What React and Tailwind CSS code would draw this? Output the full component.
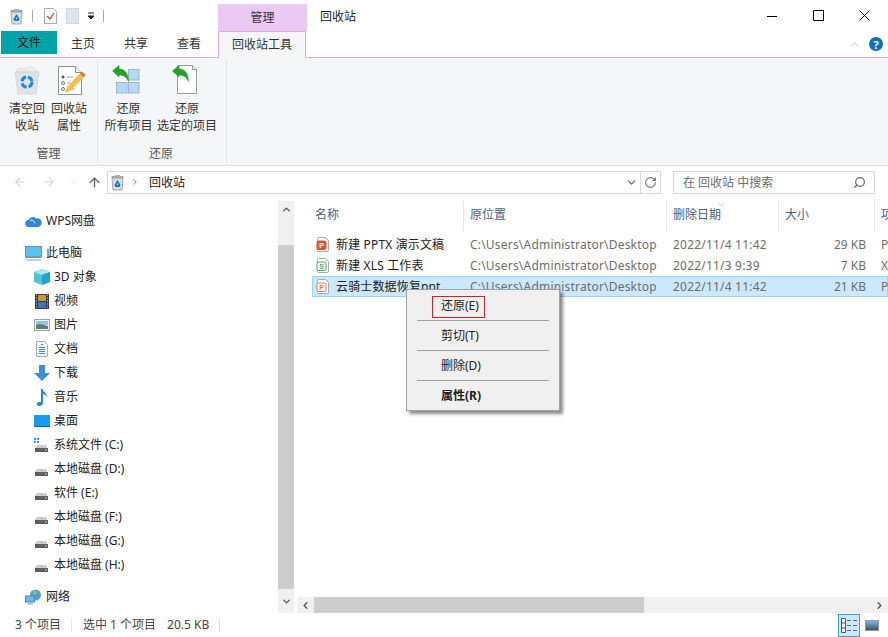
import React from "react";
import { ArrowLeft, ArrowRight, ArrowUp, ChevronDown, ChevronUp, ChevronRight, ChevronLeft, RotateCw, Search } from "lucide-react";

function BinIcon() {
  return (
    <svg width="13" height="17" viewBox="0 0 13 17">
      <path d="M1 4h11l-1 12H2z" fill="#d5dfe6" stroke="#8d979e" strokeWidth="0.8" />
      <path d="M0.500 3h12" stroke="#8d979e" strokeWidth="1.6" />
      <path d="M4 1h5v1.500H4z" fill="#aab3b9" />
      <path d="M6.500 6l3 5-1 2h-4l-1-2z" fill="#1471bd" />
      <path d="M5.800 9.500h1.400v1.700H5.800z" fill="#e3edf3" />
    </svg>
  );
}

function BigBin() {
  return (
    <svg width="26" height="29" viewBox="0 0 26 29">
      <path d="M2 5l3-3 6 1 4-3 6 2 3 4z" fill="#eceeef" stroke="#cfd3d5" strokeWidth="0.6" />
      <path d="M1 6h24l-3 22H4z" fill="#dfe3e5" stroke="#c8ccce" strokeWidth="0.6" />
      <circle cx="13" cy="16" r="5" fill="none" stroke="#1f86d8" strokeWidth="3" strokeDasharray="6 2" />
    </svg>
  );
}

function BigProps() {
  return (
    <svg width="28" height="29" viewBox="0 0 28 29">
      <path d="M0.500 0.500h17l6 6v22h-23z" fill="#fff" stroke="#8f8f8f" />
      <path d="M17.500 0.500v6h6" fill="#f1f1f1" stroke="#8f8f8f" />
      <circle cx="5" cy="11" r="1.500" fill="#555" />
      <circle cx="5" cy="17" r="1.500" fill="none" stroke="#777" />
      <circle cx="5" cy="23" r="1.500" fill="none" stroke="#777" />
      <path d="M9 11h6M9 17h3M9 23h8" stroke="#999" />
      <path d="M24 6l3.500 3-15 15-5 2 2-5z" fill="#f6c244" stroke="#d99a22" strokeWidth="0.6" />
      <path d="M24 6l3.500 3-2 2-3.500-3z" fill="#e2704a" />
    </svg>
  );
}

function GreenArrow() {
  return (
    <svg width="17" height="17" viewBox="0 0 17 17">
      <path d="M0.500 6L7 0.500V4c5 0 9 3 9.500 12.500-1.500-4-4.500-6.500-9.500-6.500v2z" fill="#21a32a" stroke="#178a20" strokeWidth="0.5" />
    </svg>
  );
}

function RestoreAll() {
  return (
    <div className="relative w-[30px] h-[31px]">
      <svg width="30" height="31" viewBox="0 0 30 31">
        {[[14.5, 1.5], [2.5, 14.5], [14.5, 14.5]].map(([x, y]) => (
          <rect key={x + "-" + y} x={x} y={y} width="10.500" height="10.500" fill="#b6d8f4" stroke="#9bb4c8" />
        ))}
      </svg>
      <div className="absolute left-[-2px] top-[-3px]"><GreenArrow /></div>
    </div>
  );
}

function RestoreOne() {
  return (
    <div className="relative w-[30px] h-[30px]">
      <svg width="30" height="30" viewBox="0 0 30 30">
        <path d="M5.500 0.500h15l4 4v24h-19z" fill="#fff" stroke="#9a9a9a" />
        <path d="M20.500 0.500v4h4" fill="#eee" stroke="#9a9a9a" />
      </svg>
      <div className="absolute left-0 top-0"><GreenArrow /></div>
    </div>
  );
}

function Cloud() {
  return (
    <svg width="17" height="12" viewBox="0 0 17 12">
      <path d="M4 12a3.500 3.500 0 0 1-.5-7A4.500 4.500 0 0 1 11 3.500 4 4 0 0 1 13.500 12z" fill="#2f86dc" />
      <path d="M5 5.500c2-1 4 .5 5 3" stroke="#fff" fill="none" />
    </svg>
  );
}

function Monitor() {
  return (
    <svg width="17" height="15" viewBox="0 0 17 15">
      <rect x="0.500" y="0.500" width="16" height="10.500" fill="#5cc1f3" stroke="#6f8da0" />
      <path d="M1 11h15v1H1z" fill="#7c8f9b" />
      <path d="M1 14h15" stroke="#98a5ae" />
    </svg>
  );
}

function Cube() {
  return (
    <svg width="16" height="16" viewBox="0 0 16 16">
      <path d="M8 0L16 3v10l-8 3-8-3V3z" fill="#4fc4de" />
      <path d="M0 3l8 3 8-3-8-3z" fill="#a8e6f2" />
      <path d="M8 6v10l8-3V3z" fill="#20a6c8" />
    </svg>
  );
}

function Film() {
  return (
    <svg width="14" height="15" viewBox="0 0 14 15">
      <rect width="14" height="15" fill="#3c3c3c" />
      <rect x="3" y="1" width="8" height="6" fill="#c9983e" />
      <rect x="3" y="8" width="8" height="6" fill="#3e73c4" />
      <path d="M1 1h1M1 4h1M1 7h1M1 10h1M1 13h1M12 1h1M12 4h1M12 7h1M12 10h1M12 13h1" stroke="#ddd" />
    </svg>
  );
}

function Picture() {
  return (
    <svg width="16" height="12" viewBox="0 0 16 12">
      <rect x="0.500" y="0.500" width="15" height="11" fill="#eef3f6" stroke="#98a2a8" />
      <rect x="2" y="2" width="12" height="4" fill="#93c4ea" />
      <path d="M2 6l4-1 8 2v3H2z" fill="#5e7f6c" />
    </svg>
  );
}

function DocIcon() {
  return (
    <svg width="12" height="16" viewBox="0 0 12 16">
      <path d="M.5.500h8l3 3v12H.500z" fill="#fff" stroke="#9fb0ba" />
      <path d="M5 3.500h2M3 6.500h6M3 8.500h6M3 10.500h6M3 12.500h6" stroke="#3f8fc4" />
    </svg>
  );
}

function Download() {
  return (
    <svg width="16" height="16" viewBox="0 0 16 16">
      <path d="M5 0h6v8h5l-8 8-8-8h5z" fill="#3b8ddd" />
    </svg>
  );
}

function Music() {
  return (
    <svg width="12" height="17" viewBox="0 0 12 17">
      <path d="M5 0h1.500c.5 3 5 4 4.500 8-1-2-2.500-3-4-3v9c0 2-2 3-4 3S0 15.500 1 14.300 3.500 13 5 13.200z" fill="#1f8ae0" />
    </svg>
  );
}

function Desktop() {
  return (
    <svg width="16" height="12" viewBox="0 0 16 12">
      <rect width="16" height="11" rx="0.500" fill="#1a9af0" />
      <path d="M0 11h16v1H0z" fill="#0e5fa5" />
    </svg>
  );
}

function Drive({ sys }) {
  return (
    <svg width="15" height="15" viewBox="0 0 15 15">
      {sys && <path d="M0 0h2v2H0zM3 0h2v2H3zM0 3h2v2H0zM3 3h2v2H3z" fill="#17a5dc" />}
      <path d="M2 8.500Q2 7 4 7h7q2 0 2 1.500V10H1z" fill="#c9cccd" />
      <rect x="1" y="10" width="13" height="4" fill="#5b5f60" />
      <rect x="11" y="11" width="1.500" height="1.500" fill="#9fd27a" />
    </svg>
  );
}

function Globe() {
  return (
    <svg width="17" height="16" viewBox="0 0 17 16">
      <circle cx="10.500" cy="6" r="5.500" fill="#4f9fd6" />
      <path d="M8 2c2-1 4 0 4 2s-3 2-4 1z" fill="#8bc16c" />
      <rect x="0.500" y="7" width="9" height="6" fill="#69b9ec" stroke="#4b86b0" />
      <path d="M3 15h5" stroke="#6d8ea5" />
    </svg>
  );
}

function FileIcon({ color, light, letter }) {
  return (
    <svg width="14" height="15" viewBox="0 0 14 15">
      <path d="M2.500.500h7l3 3v10a1 1 0 0 1-1 1h-9a1 1 0 0 1-1-1v-12a1 1 0 0 1 1-1z" fill="#fff" stroke="#a8a8a8" />
      <rect x="1" y="4" width="9" height="8.500" rx="1.500" fill={light ? "#fff" : color} stroke={color} />
      <text x="5.500" y="11" textAnchor="middle" fontSize="7" fontWeight="700" fill={light ? color : "#fff"} fontFamily="Liberation Sans, sans-serif">{letter}</text>
    </svg>
  );
}

const nav = [
  [<Cube />, "3D 对象"],
  [<Film />, "视频"],
  [<Picture />, "图片"],
  [<DocIcon />, "文档"],
  [<Download />, "下载"],
  [<Music />, "音乐"],
  [<Desktop />, "桌面"],
  [<Drive sys />, "系统文件 (C:)"],
  [<Drive />, "本地磁盘 (D:)"],
  [<Drive />, "软件 (E:)"],
  [<Drive />, "本地磁盘 (F:)"],
  [<Drive />, "本地磁盘 (G:)"],
  [<Drive />, "本地磁盘 (H:)"],
];

const files = [
  { name: "新建 PPTX 演示文稿", date: "2022/11/4 11:42", size: "29 KB", type: "P", icon: <FileIcon color="#d9572b" letter="P" /> },
  { name: "新建 XLS 工作表", date: "2022/11/3 9:39", size: "7 KB", type: "X", icon: <FileIcon color="#4aa564" light letter="S" /> },
  { name: "云骑士数据恢复ppt", date: "2022/11/4 11:42", size: "21 KB", type: "P", selected: true, icon: <FileIcon color="#e07a50" light letter="P" /> },
];

export default function App() {
  return (
    <div className="w-[888px] h-[637px] overflow-hidden bg-white flex flex-col text-[12px] text-[#222] font-['Noto_Sans','Noto_Sans_CJK_SC',sans-serif]">
      {/* title bar */}
      <div className="h-[31px] flex shrink-0">
        <div className="w-[218px] flex items-center pl-[10px] pt-[1px]">
          <BinIcon />
          <div className="w-px h-[12px] bg-[#aaa] ml-[9px]" />
          <svg className="ml-[11px]" width="13" height="16" viewBox="0 0 13 16">
            <path d="M.500.500h9l3 3v12H.500z" fill="#fff" stroke="#aaa" />
            <path d="M3 8l3 3 4-6" fill="none" stroke="#d9482b" strokeWidth="1.300" />
          </svg>
          <div className="w-[13px] h-[16px] bg-[#dbe6f4] border border-[#cfd9e6] ml-[9px]" />
          <svg className="ml-[8px]" width="8" height="8" viewBox="0 0 8 8">
            <path d="M1 1h6M1 4h6l-3 3z" stroke="#222" fill="#222" />
          </svg>
          <div className="w-px h-[12px] bg-[#aaa] ml-[8px]" />
        </div>
        <div className="w-[89px] mt-[4px] bg-[#eac9f5] flex items-center justify-center text-[#333]">管理</div>
        <div className="pl-[13px] pt-[8px] text-[#222]">回收站</div>
        <div className="ml-auto flex pr-[1px]">
          <div className="w-[46px] flex items-center justify-center">
            <svg width="10" height="10" viewBox="0 0 10 10"><path d="M0 5.500h10" stroke="#000" /></svg>
          </div>
          <div className="w-[46px] flex items-center justify-center">
            <svg width="11" height="11" viewBox="0 0 11 11"><path d="M.500.500h10v10H.500z" fill="none" stroke="#000" /></svg>
          </div>
          <div className="w-[46px] flex items-center justify-center">
            <svg width="11" height="11" viewBox="0 0 11 11"><path d="M.500.500l10 10M10.500.500l-10 10" stroke="#000" strokeWidth="0.900" /></svg>
          </div>
        </div>
      </div>

      {/* tabs */}
      <div className="h-[27px] flex shrink-0 border-b border-[#e3a9dd] relative">
        <div className="ml-[1px] w-[56px] h-[23px] bg-[#00a3a8] flex items-center justify-center text-[#111]">文件</div>
        <div className="w-[52px] h-[26px] flex items-center justify-center text-[#333]">主页</div>
        <div className="w-[54px] h-[26px] flex items-center justify-center text-[#333]">共享</div>
        <div className="w-[52px] h-[26px] flex items-center justify-center text-[#333]">查看</div>
        <div className="w-[88px] h-[27px] ml-[3px] border border-b-0 border-[#e3a9dd] bg-[#f5f6f7] flex items-center justify-center text-[#333]">回收站工具</div>
        <div className="ml-auto flex items-center pr-[5px]">
          <ChevronUp size={13} strokeWidth={1} className="text-[#888]" />
          <div className="ml-[8px] w-[14px] h-[14px] rounded-full bg-[#0f6fc6] text-white text-[11px] font-bold flex items-center justify-center leading-none">?</div>
        </div>
      </div>

      {/* ribbon */}
      <div className="h-[108px] shrink-0 flex bg-[#f5f6f7] border-b border-[#dadbdc] text-[#333]">
        <div className="w-[98px] flex flex-col border-r border-[#e1e2e3] my-[2px]">
          <div className="flex flex-1 pl-[6px] pt-[4px]">
            <div className="w-[42px] flex flex-col items-center">
              <div className="h-[34px] pt-[2px]"><BigBin /></div>
              <div className="mt-[2px] text-center leading-[17px]">清空回<br />收站</div>
            </div>
            <div className="w-[42px] flex flex-col items-center">
              <div className="h-[34px] pt-[2px] pl-[5px]"><BigProps /></div>
              <div className="mt-[2px] text-center leading-[17px]">回收站<br />属性</div>
            </div>
          </div>
          <div className="h-[20px] pt-[2px] flex items-center justify-center text-[#555]">管理</div>
        </div>
        <div className="w-[129px] flex flex-col border-r border-[#e1e2e3] my-[2px]">
          <div className="flex flex-1 pl-[5px] pt-[4px]">
            <div className="w-[51px] flex flex-col items-center whitespace-nowrap">
              <div className="h-[34px] pt-[4px]"><RestoreAll /></div>
              <div className="mt-[2px] text-center leading-[17px]">还原<br />所有项目</div>
            </div>
            <div className="w-[66px] flex flex-col items-center whitespace-nowrap">
              <div className="h-[34px] pt-[1px]"><RestoreOne /></div>
              <div className="mt-[2px] text-center leading-[17px]">还原<br />选定的项目</div>
            </div>
          </div>
          <div className="h-[20px] pt-[2px] flex items-center justify-center text-[#555] pr-[2px]">还原</div>
        </div>
      </div>

      {/* address bar */}
      <div className="h-[31px] shrink-0 flex items-center pt-[1px]">
        <div className="w-[107px] flex items-center pl-[13px]">
          <ArrowLeft size={14} className="text-[#d5d5d5]" />
          <ArrowRight size={14} className="text-[#d5d5d5] ml-[15px]" />
          <ChevronDown size={9} strokeWidth={2} className="text-[#d5d5d5] ml-[13px]" />
          <ArrowUp size={15} strokeWidth={2.200} className="text-[#666] ml-[9px]" />
        </div>
        <div className="w-[554px] h-[23px] border border-[#d9d9d9] flex items-center pl-[3px]">
          <BinIcon />
          <ChevronRight size={10} strokeWidth={2} className="text-[#777] ml-[6px]" />
          <span className="ml-[9px] pt-[1px] text-[#222]">回收站</span>
          <ChevronDown size={13} strokeWidth={2.200} className="text-[#666] ml-auto mr-[2px]" />
          <div className="w-[20px] h-full border-l border-[#d9d9d9] flex items-center justify-center">
            <RotateCw size={13} className="text-[#777]" />
          </div>
        </div>
        <div className="ml-[12px] w-[202px] h-[23px] border border-[#d9d9d9] flex items-center pl-[9px] pr-[8px] text-[#6d6d6d]">
          <span className="pt-[2px]">在 回收站 中搜索</span>
          <Search size={13} strokeWidth={2.200} className="text-[#666] ml-auto -scale-x-100" />
        </div>
      </div>

      {/* main */}
      <div className="flex-1 flex min-h-0 relative">
        <div className="w-[278px] shrink-0 pt-[12px] text-[#222]">
          <div className="h-[24px] flex items-center pl-[25px]">
            <div className="w-[21px]"><Cloud /></div>WPS网盘
          </div>
          <div className="h-[24px] mt-[8px] flex items-center pl-[25px]">
            <div className="w-[21px]"><Monitor /></div>此电脑
          </div>
          {nav.map(([icon, label]) => (
            <div key={label} className="h-[24px] flex items-center pl-[33px]">
              <div className="w-[21px] flex justify-center pr-[4px]">{icon}</div>{label}
            </div>
          ))}
          <div className="h-[24px] mt-[8px] flex items-center pl-[25px]">
            <div className="w-[21px]"><Globe /></div>网络
          </div>
        </div>

        {/* nav scrollbar */}
        <div className="w-[16px] shrink-0 mt-[4px] bg-[#f0f0f0] flex flex-col">
          <div className="h-[44px] flex justify-center pt-[3px]"><ChevronUp size={11} strokeWidth={3} className="text-[#555]" /></div>
          <div className="h-[344px] bg-[#cdcdcd]" />
          <div className="flex-1 flex justify-center items-center"><ChevronDown size={11} strokeWidth={3} className="text-[#555]" /></div>
        </div>

        {/* list */}
        <div className="flex-1 min-w-0 flex flex-col pl-[3px] mt-[4px]">
          <div className="h-[30px] shrink-0 flex text-[#4c607a] relative">
            <div className="w-[167px] shrink-0 pl-[18px] pt-[5px] border-r border-[#e5e5e5]">名称</div>
            <div className="w-[203px] shrink-0 pl-[6px] pt-[5px] border-r border-[#e5e5e5]">原位置</div>
            <div className="w-[112px] shrink-0 pl-[6px] pt-[5px] border-r border-[#e5e5e5] relative">
              <ChevronDown size={9} strokeWidth={1.200} className="absolute left-[50px] top-[-1px] text-[#888]" />
              删除日期
            </div>
            <div className="w-[96px] shrink-0 pl-[6px] pt-[5px] border-r border-[#e5e5e5]">大小</div>
            <div className="pl-[6px] pt-[5px]">项</div>
          </div>
          <div className="h-[3px] shrink-0" />
          <div className="flex-1 min-h-0">
            {files.map((f) => (
              <div
                key={f.name}
                className={"h-[21px] ml-[15px] flex items-center whitespace-nowrap border " + (f.selected ? "bg-[#cce8ff] border-[#99d1ff]" : "border-transparent")}
              >
                <div className="w-[23px] pl-[3px] shrink-0">{f.icon}</div>
                <div className="w-[134px] shrink-0 text-[#222] tracking-[0.15px]">{f.name}</div>
                <div className="w-[203px] shrink-0 text-[#6d6d6d] tracking-[0.2px]">C:\Users\Administrator\Desktop</div>
                <div className="w-[96px] shrink-0 text-[#6d6d6d] tracking-[0.2px]">{f.date}</div>
                <div className="w-[97px] shrink-0 text-right text-[#6d6d6d]">{f.size}</div>
                <div className="pl-[15px] text-[#6d6d6d]">{f.type}</div>
              </div>
            ))}
          </div>
          <div className="h-[16px] shrink-0 bg-[#f0f0f0] flex items-center">
            <div className="w-[17px] flex justify-center"><ChevronLeft size={11} strokeWidth={3} className="text-[#555]" /></div>
            <div className="w-[330px] h-full bg-[#cdcdcd]" />
            <div className="ml-auto w-[17px] flex justify-center"><ChevronRight size={11} strokeWidth={3} className="text-[#555]" /></div>
          </div>
        </div>

        {/* context menu */}
        <div className="absolute left-[406px] top-[92px] w-[154px] h-[122px] bg-[#f0f0f0] border border-[#a0a0a0] shadow-[3px_3px_3px_rgba(0,0,0,0.45)] text-[#222] pt-[1px] px-[10px]">
          <div className="h-[29px] flex items-center pl-[24px] pt-[1px] relative">
            <span>还原(E)</span>
            <div className="absolute left-[15px] top-[5px] w-[53px] h-[22px] border border-[#d0202a]" />
          </div>
          <div className="h-px bg-[#a0a0a0]" />
          <div className="h-[29px] flex items-center pl-[24px]">剪切(T)</div>
          <div className="h-px bg-[#a0a0a0]" />
          <div className="h-[29px] flex items-center pl-[24px]">删除(D)</div>
          <div className="h-px bg-[#a0a0a0]" />
          <div className="h-[29px] flex items-center pl-[24px] font-bold">属性(R)</div>
        </div>
      </div>

      {/* status bar */}
      <div className="h-[24px] shrink-0 flex items-center text-[#444] relative">
        <span className="pl-[15px]">3 个项目</span>
        <div className="w-px h-[14px] bg-[#e5e5e5] ml-[10px]" />
        <span className="ml-[11px]">选中 1 个项目</span>
        <span className="ml-[11px]">20.5 KB</span>
        <div className="w-px h-[14px] bg-[#e5e5e5] ml-[10px]" />
        <div className="ml-auto flex items-center pr-[9px]">
          <div className="w-[22px] h-[23px] bg-[#cce8ff] border border-[#3c9fc4] flex items-center justify-center">
            <svg width="16" height="15" viewBox="0 0 16 15">
              <path d="M.500.500h4v14h-4zM.500 5h4M.500 10h4" fill="#fff" stroke="#555" />
              <path d="M6 2.500h4M12 2.500h4M6 7.500h4M12 7.500h4M6 12.500h4M12 12.500h4" stroke="#666" />
            </svg>
          </div>
          <div className="w-[14px] h-[11px] ml-[5px] border border-[#999] bg-gradient-to-b from-[#7fb7ea] to-[#40555f]" />
        </div>
      </div>
    </div>
  );
}
